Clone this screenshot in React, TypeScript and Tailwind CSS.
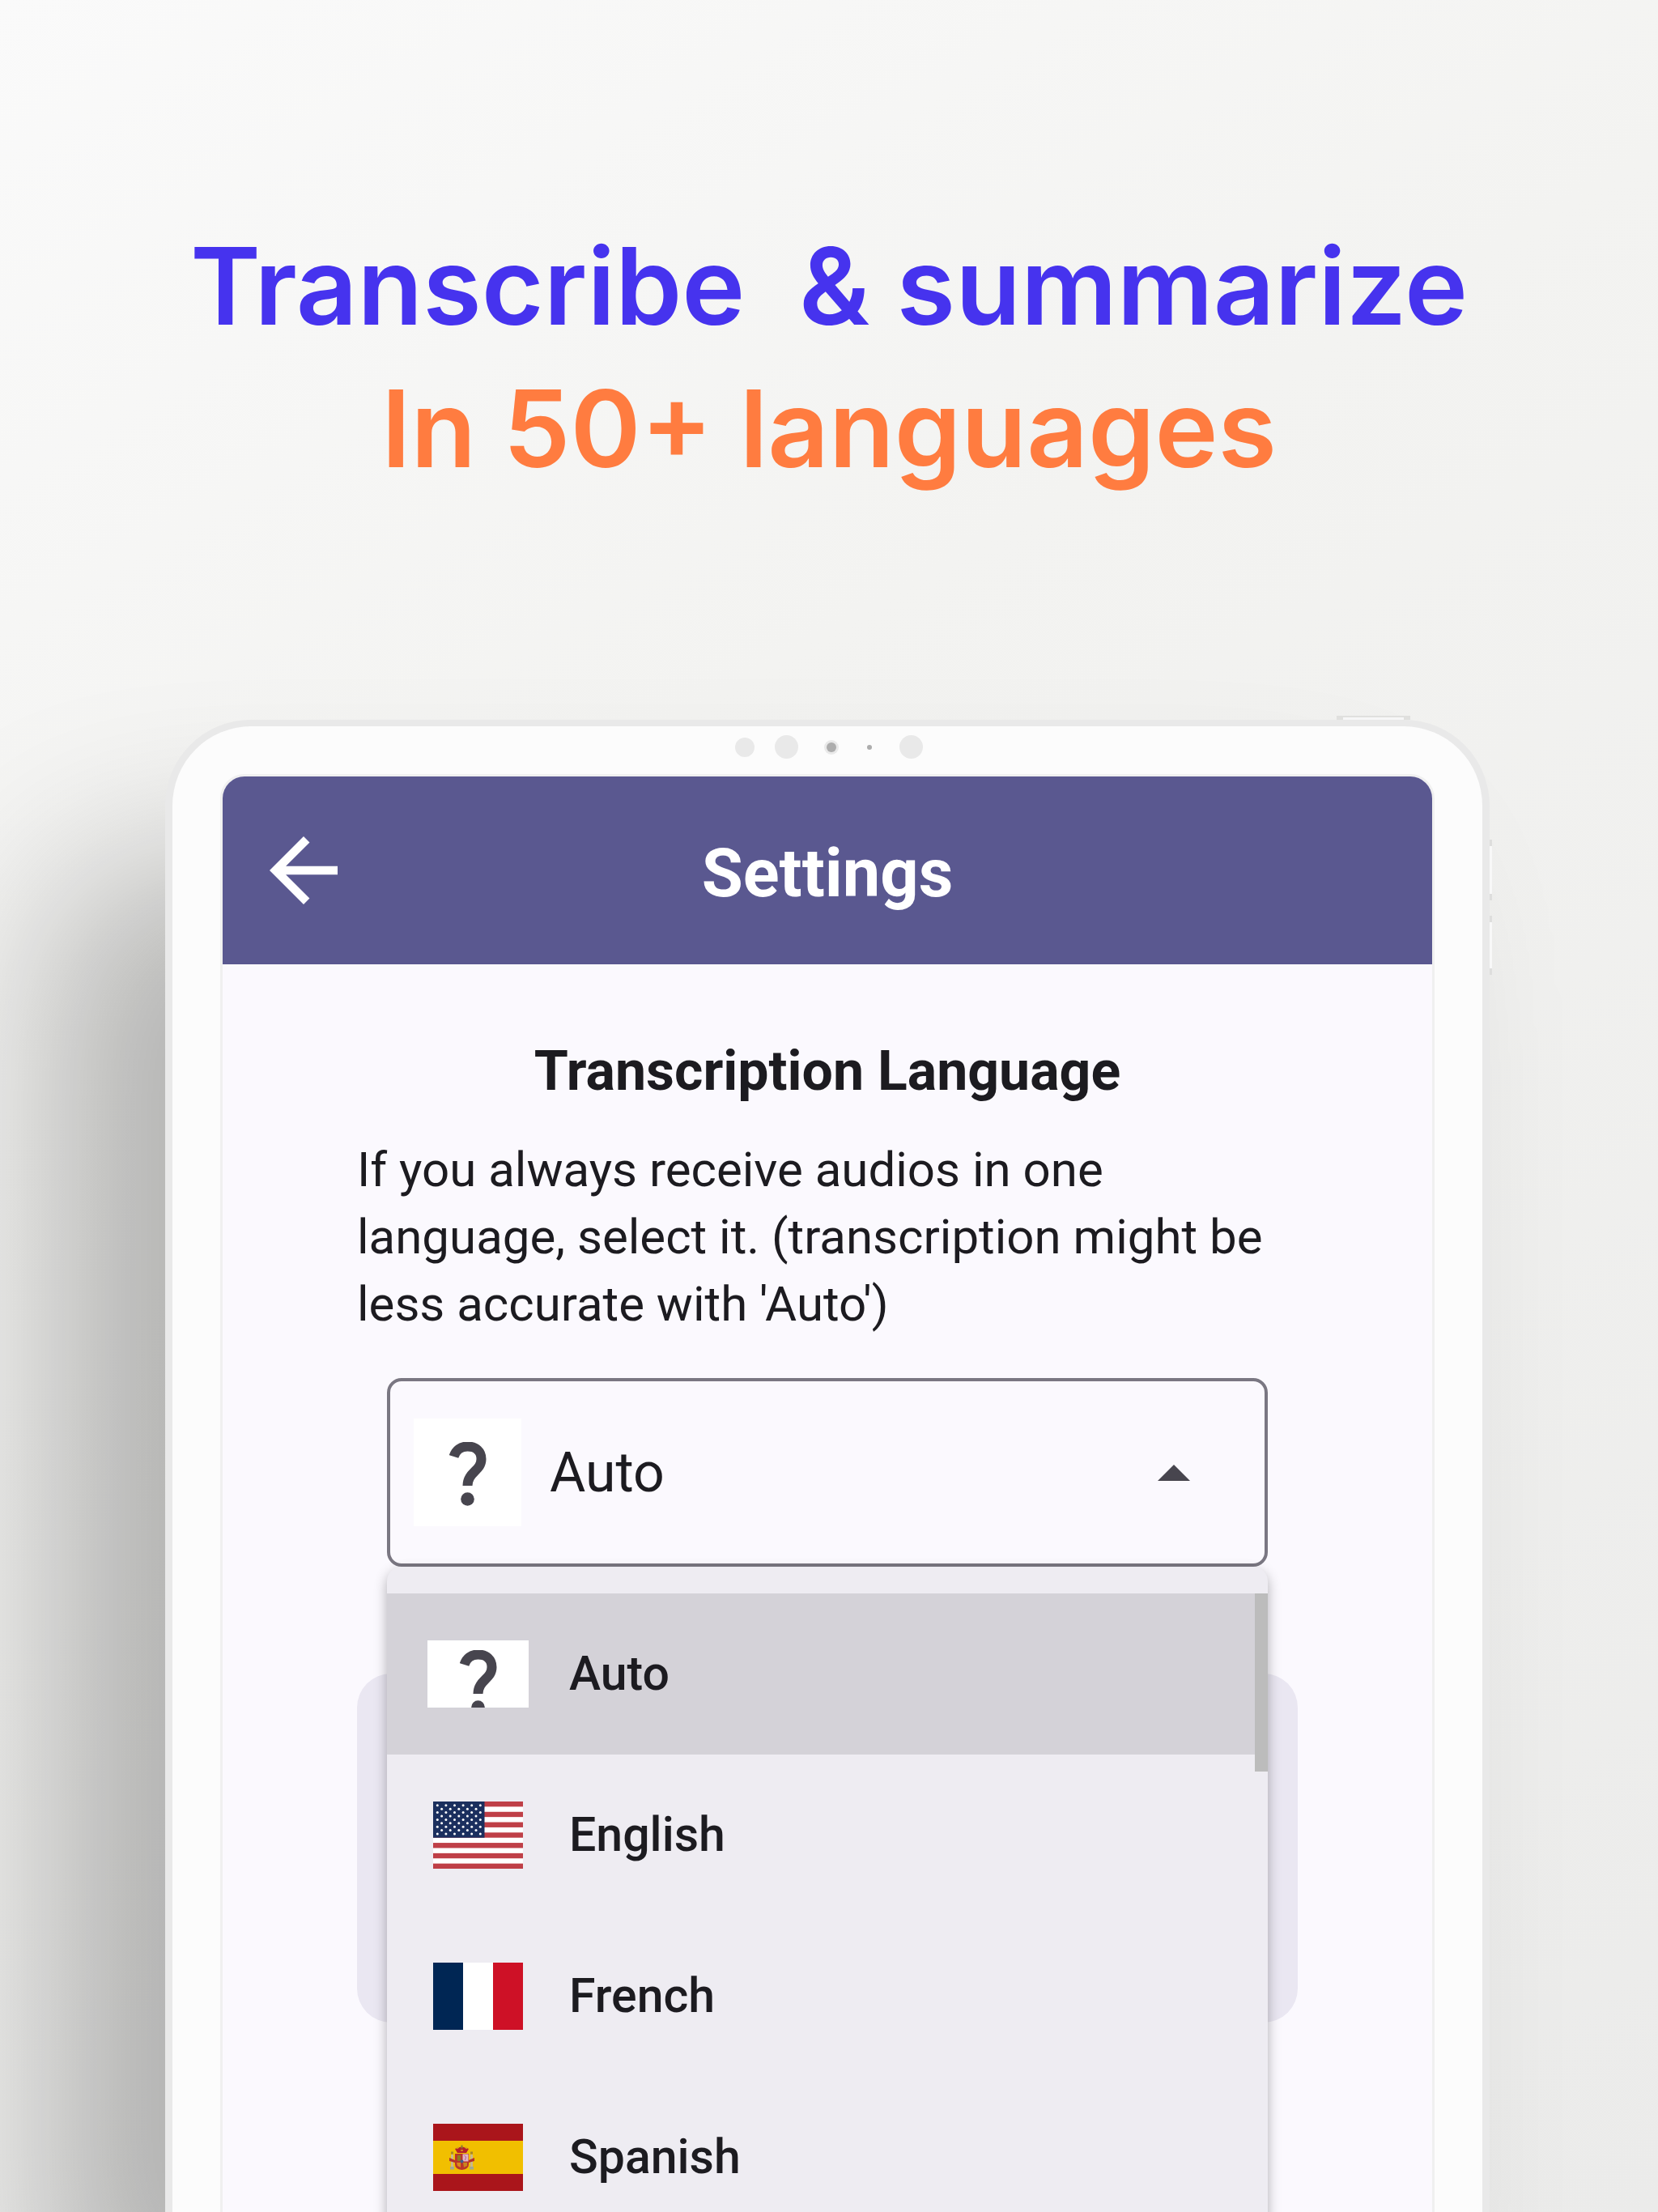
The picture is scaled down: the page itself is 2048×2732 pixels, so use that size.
import { useState } from "react";

type Language = "Auto" | "English" | "French" | "Spanish";

const LANGUAGES: Language[] = ["Auto", "English", "French", "Spanish"];

function BackIcon() {
  return (
    <svg viewBox="0 0 24 24" className="size-[126px] fill-white" aria-hidden="true">
      <path d="M20 11H7.83l5.59-5.59L12 4l-8 8 8 8 1.41-1.41L7.83 13H20v-2z" />
    </svg>
  );
}

function QuestionIcon() {
  return (
    <svg viewBox="0 0 46 79" className="h-[79px] w-[46px] shrink-0" aria-hidden="true">
      <path
        d="M5.5 18C8 10 14 5.500 22.500 5.500C33 5.500 39.500 12 39.500 21C39.500 36 22.500 37 22.500 54"
        fill="none"
        stroke="#47454e"
        strokeWidth="12"
      />
      <circle cx="22.500" cy="70.500" r="8.300" fill="#47454e" />
    </svg>
  );
}

function UsFlag() {
  const stars = [];
  for (let row = 0; row < 9; row++) {
    const even = row % 2 === 0;
    for (let col = 0; col < (even ? 6 : 5); col++) {
      stars.push(
        <circle
          key={row + "-" + col}
          cx={(even ? 5.3 : 10.6) + col * 10.6}
          cy={4.8 + row * 4.4}
          r="1.5"
          fill="#fff"
        />,
      );
    }
  }
  return (
    <svg viewBox="0 0 111 83" className="h-[83px] w-[111px]" aria-hidden="true">
      <rect width="111" height="83" fill="#fff" />
      {[0, 1, 2, 3, 4, 5, 6].map((n) => (
        <rect key={n} y={n * 12.77} width="111" height="6.380" fill="#bf3f47" />
      ))}
      <rect width="63.500" height="44.700" fill="#1b2f5e" />
      {stars}
    </svg>
  );
}

function FrenchFlag() {
  return (
    <svg viewBox="0 0 3 2" preserveAspectRatio="none" className="h-[83px] w-[111px]" aria-hidden="true">
      <rect width="3" height="2" fill="#fff" />
      <rect width="1" height="2" fill="#002654" />
      <rect x="2" width="1" height="2" fill="#ce1126" />
    </svg>
  );
}

function SpanishFlag() {
  return (
    <svg viewBox="0 0 111 83" className="h-[83px] w-[111px]" aria-hidden="true">
      <rect width="111" height="83" fill="#aa151b" />
      <rect y="21" width="111" height="41" fill="#f1bf00" />
      <g>
        <path d="M27 31q8.500-5 17 0l-3 5H30z" fill="#b5202a" />
        <path d="M34.500 26.500h2v4h-2z" fill="#8a7a2e" />
        <path d="M29 30.500l3-1.500M42 30.500l-3-1.500M34 33h3" stroke="#d9a514" strokeWidth="1.500" fill="none" />
        <path d="M27 37h17v13q0 6-8.500 7-8.500-1-8.500-7z" fill="#b9352a" />
        <path d="M30 39h4v7h-4z" fill="#8f7a1c" />
        <path d="M36.500 37.500h7v9h-7z" fill="#e0b7c6" />
        <path d="M38.500 39l2 2-1 4" stroke="#b0608a" strokeWidth="1" fill="none" />
        <path d="M29 48h5v6l-4-2z" fill="#d98a1a" />
        <path d="M37 48h5v4l-4 2z" fill="#c9851d" />
        <circle cx="35.500" cy="46.500" r="2" fill="#3f5d8c" />
        <path d="M22 38h3v15h-3zM46 38h3v15h-3z" fill="#c9b98a" />
        <path d="M22 34.500h3v3h-3zM46 34.500h3v3h-3z" fill="#a8862a" />
        <path d="M20 42l7 3v3l-7-2zM51 42l-7 3v3l7-2z" fill="#b5312a" />
        <path d="M21 53h5v3.500h-5zM45 53h5v3.500h-5z" fill="#a3a98f" />
      </g>
    </svg>
  );
}

function LanguageIcon({ language }: { language: Language }) {
  if (language === "English") return <UsFlag />;
  if (language === "French") return <FrenchFlag />;
  if (language === "Spanish") return <SpanishFlag />;
  return (
    <span className="flex h-[83px] w-full justify-center overflow-hidden bg-white pt-3">
      <QuestionIcon />
    </span>
  );
}

function Camera() {
  return (
    <div className="flex h-[59px] items-center justify-center pb-2 pl-1" aria-hidden="true">
      <span className="size-6 rounded-full bg-[#e9e9e9]" />
      <span className="ml-[25px] size-[29px] rounded-full bg-[#e9e9e9]" />
      <span className="ml-8 flex size-[18px] items-center justify-center rounded-full bg-[#e9e9e9]">
        <span className="size-3 rounded-full bg-[#adadad]" />
      </span>
      <span className="ml-[35px] size-1.5 rounded-full bg-[#adadad]" />
      <span className="ml-[34px] size-[29px] rounded-full bg-[#e9e9e9]" />
    </div>
  );
}

export default function App() {
  const [selected, setSelected] = useState<Language>("Auto");

  return (
    <main className="flex h-screen flex-col overflow-hidden bg-linear-[150deg,#fafafa_0%,#f3f3f1_35%,#ebebea_100%]">
      <h1 className="pt-[265px] text-center font-['Inter'] text-[132px] leading-[176px] font-semibold whitespace-pre">
        <span className="block text-[#4633ee]">{"Transcribe  & summarize"}</span>
        <span className="block text-[#ff7c40]">In 50+ languages</span>
      </h1>

      <div className="relative mt-[272px] mr-52 ml-51 flex flex-1 flex-col rounded-t-[106px] border-x-[9px] border-t-8 border-[#e9e9e9] bg-[#fcfcfc] shadow-[-140px_180px_220px_rgba(0,0,0,0.26)]">
        <span className="absolute -top-[13px] right-[89px] h-[5px] w-[91px] border-x-8 border-t-2 border-[#e0e0de] bg-[#f7f7f7]" />
        <span className="absolute top-[140px] -right-3 h-[75px] w-[3px] border-y-8 border-[#dededd] bg-[#f8f8f8]" />
        <span className="absolute top-[234px] -right-3 h-[73px] w-[3px] border-y-8 border-[#dededd] bg-[#f8f8f8]" />
        <Camera />

        <div className="mx-[59px] flex flex-1 flex-col overflow-hidden rounded-t-[30px] border-x-[3px] border-t-[3px] border-[#f0f0f0] bg-[#fbf9fe] font-['Roboto'] text-[#1c1b20]">
          <header className="grid h-[232px] shrink-0 grid-cols-[1fr_auto_1fr] items-center bg-[#5a5890] px-[37px] text-white">
            <button type="button" aria-label="Back" className="justify-self-start">
              <BackIcon />
            </button>
            <h2 className="pt-2 text-[83px] leading-[100px] font-bold">Settings</h2>
          </header>

          <section className="px-[166px] pt-[88px]">
            <h3 className="text-center text-[68px] leading-[88px] font-bold">Transcription Language</h3>
            <p className="mt-9 text-[60px] leading-[83px]">
              If you always receive audios in one language, select it. (transcription might be less accurate with
              'Auto')
            </p>

            <div className="relative z-10 mx-[37px] mt-[50px]">
              <label className="flex h-[233px] items-center rounded-[18px] border-4 border-[#7a7782] pl-[29px]">
                <span className="flex size-[133px] items-center justify-center bg-white pt-1">
                  <QuestionIcon />
                </span>
                <select
                  aria-label="Transcription Language"
                  value={selected}
                  onChange={(event) => setSelected(event.target.value as Language)}
                  className="ml-[35px] h-full flex-1 appearance-none bg-transparent text-[68px] outline-none"
                >
                  {LANGUAGES.map((language) => (
                    <option key={language}>{language}</option>
                  ))}
                </select>
                <svg viewBox="0 0 40 20" className="mr-[92px] h-5 w-10 fill-[#47454e]" aria-hidden="true">
                  <path d="M0 20L20 0l20 20z" />
                </svg>
              </label>

              <div className="absolute inset-x-0 top-full h-screen rounded-t-[18px] bg-[#eeecf2] pt-[33px] shadow-[0_6px_16px_rgba(0,0,0,0.3)]">
                <div className="relative">
                  <ul>
                    {LANGUAGES.map((language) => (
                      <li key={language}>
                        <button
                          type="button"
                          onClick={() => setSelected(language)}
                          aria-pressed={language === selected}
                          className="flex h-[199px] w-full items-center gap-[50px] px-[50px] text-left text-[59px] font-medium aria-pressed:bg-[#d4d2d8]"
                        >
                          <span className="flex w-[125px] justify-center">
                            <LanguageIcon language={language} />
                          </span>
                          {language}
                        </button>
                      </li>
                    ))}
                  </ul>
                  <span className="absolute top-0 right-0 h-[220px] w-4 bg-[#bcbcbc]" aria-hidden="true" />
                </div>
              </div>
            </div>

            <div className="mt-[132px] h-[431px] rounded-[42px] bg-[#eae7f2]" />
          </section>
        </div>
      </div>
    </main>
  );
}
